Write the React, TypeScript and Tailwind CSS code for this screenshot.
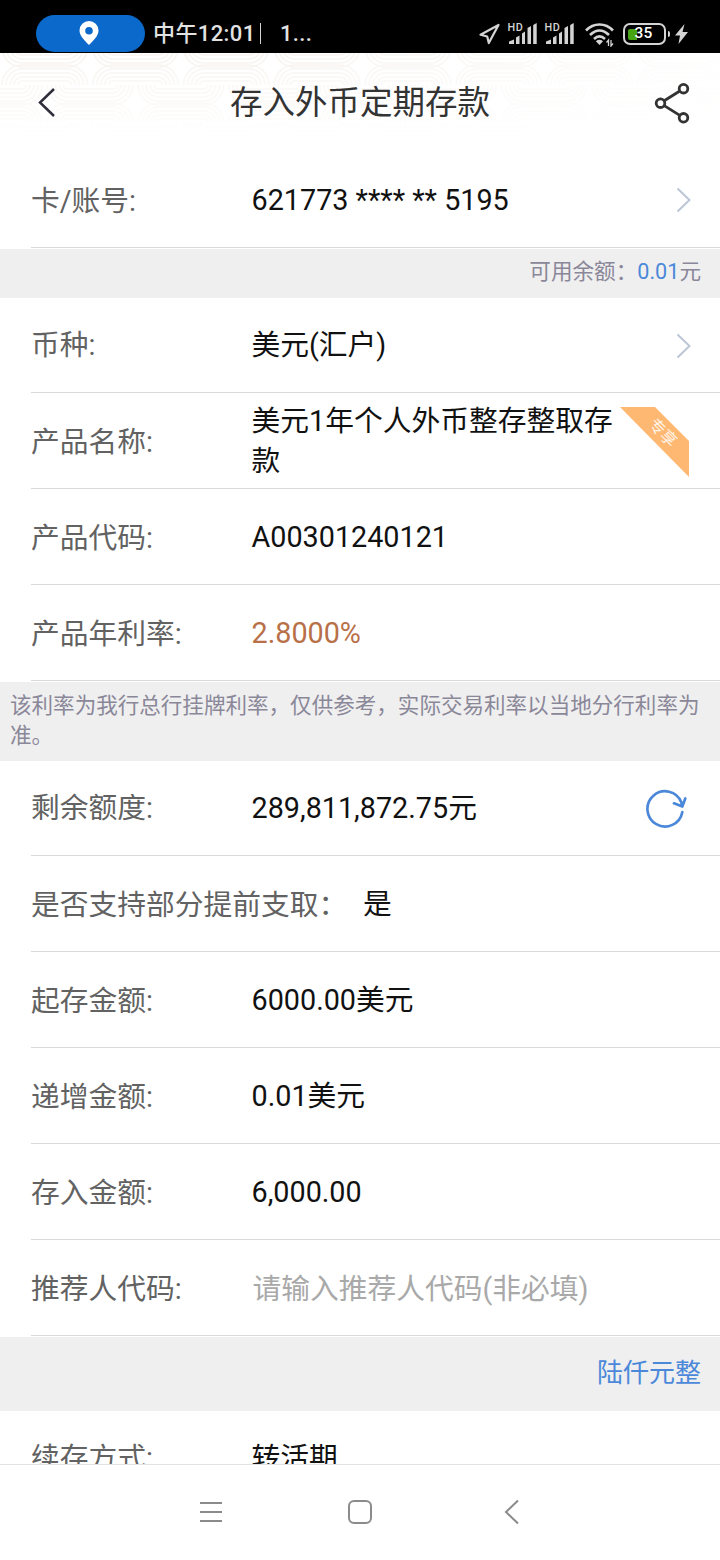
import React from "react";

const RINGS = [4, 8, 12, 16, 20];

const upper = (x: number, y: number, r: number) =>
  `M${x - r} ${y}A${r} ${r} 0 0 1 ${x} ${y - r}H${x + 45.4}A${r} ${r} 0 0 1 ${x + 45.4 + r} ${y}`;

const lower = (x: number, y: number, r: number) =>
  `M${x - r} ${y}A${r} ${r} 0 0 0 ${x} ${y + r}H${x + 45.4}A${r} ${r} 0 0 0 ${x + 45.4 + r} ${y}`;

function HeaderPattern() {
  return (
    <svg className="absolute inset-0 h-full w-full" viewBox="0 0 720 99" fill="none" aria-hidden="true">
      <defs>
        <pattern id="clouds" width="90.8" height="76" patternUnits="userSpaceOnUse" x="0" y="-44">
          <g stroke="#f7f3ef" strokeWidth="1.6">
            {RINGS.map((r) => (
              <path
                key={r}
                d={[
                  lower(22, 38, r),
                  upper(22, 76, r),
                  lower(-23.4, 0, r),
                  lower(67.4, 0, r),
                  upper(-23.4, 38, r),
                  upper(67.4, 38, r),
                ].join("")}
              />
            ))}
          </g>
        </pattern>
        <linearGradient id="fade" x1="0" y1="0" x2="0" y2="1">
          <stop offset="0" stopColor="#fff" stopOpacity="0" />
          <stop offset="0.85" stopColor="#fff" />
        </linearGradient>
        <linearGradient id="fadeRight" x1="0" y1="0" x2="1" y2="0">
          <stop offset="0.4" stopColor="#fff" stopOpacity="0" />
          <stop offset="1" stopColor="#fff" stopOpacity="0.9" />
        </linearGradient>
      </defs>
      <rect width="720" height="99" fill="url(#clouds)" />
      <rect width="720" height="99" fill="url(#fade)" />
      <rect width="720" height="99" fill="url(#fadeRight)" />
    </svg>
  );
}

function Signal() {
  return (
    <svg className="h-[24px] w-[29px] overflow-visible" viewBox="0 0 29 24" fill="#d4d4d4">
      <text x="-0.5" y="8.8" fontSize="10.8" fontWeight="500" letterSpacing="0.5" fontFamily="Roboto, sans-serif">HD</text>
      <path d="M1 22V19.5L6 17.5V22ZM8 22V15.5L11.5 13.5V22ZM14 22V11.5L17 9.5V22ZM19.5 22V6L23 4V22ZM25.2 22V3L28.7 1V22Z" />
    </svg>
  );
}

function StatusBar() {
  return (
    <div className="relative flex h-[53px] bg-black font-medium text-[#e2e2e2]">
      <div className="ml-[36px] mt-[15px] flex h-[37px] w-[109px] items-center justify-center rounded-full bg-[#0b69cb] pr-[3px]">
        <svg className="mb-px h-[24px] w-[20px]" viewBox="0 0 20 24">
          <path fill="#fff" fillRule="evenodd" d="M10 0A9.5 9.5 0 0 0 .5 9.5C.5 15 6 20 10 24C14 20 19.5 15 19.5 9.5A9.5 9.5 0 0 0 10 0ZM10 6A3.8 3.8 0 1 1 10 13.6A3.8 3.8 0 1 1 10 6Z" />
        </svg>
      </div>
      <span className="ml-[8px] mt-[17px] w-[102px] whitespace-nowrap text-[22px] leading-[34px] tracking-[0.4px]">中午12:01</span>
      <span className="ml-[5px] mt-[23px] h-[21px] w-px bg-[#d4d4d4]" />
      <span className="ml-[19px] mt-[17px] text-[22px] leading-[34px] tracking-[0.3px]">1...</span>
      <div className="absolute right-[32px] top-[22px] flex items-start">
        <svg className="mr-[8px] h-[24px] w-[21px]" viewBox="0 0 21 24" fill="none" stroke="#d4d4d4" strokeWidth="2.2" strokeLinejoin="round">
          <path d="M19.5 3L9.8 21L8.2 14.5L1.5 12.8Z" />
        </svg>
        <Signal />
        <span className="w-[8px]" />
        <Signal />
        <svg className="ml-[11px] h-[25px] w-[29px]" viewBox="0 0 29 25" fill="none" stroke="#d4d4d4" strokeWidth="2.6">
          <path d="M1 8.5C8.5 .5 20.5 .5 28 8.5M5 13C11 7 18 7 24 13M9 17C12.6 13.6 16.4 13.6 20 17" />
          <path fill="#d4d4d4" stroke="none" d="M10.8 19.2Q14.5 16.5 18 19.2L14.5 23Z" />
          <path strokeWidth="1.3" d="M23.5 24V18L21.5 20.5M26 18V24L28 21.5" />
        </svg>
        <div className="ml-[9px] mt-[1px] flex h-[22px] w-[43px] items-center rounded-[7px] border-[2.5px] border-[#d4d4d4] pl-[3px]">
          <span className="h-[11px] w-[9px] shrink-0 rounded-l-[2px] bg-[#47a514]" />
          <span className="-ml-[2px] text-[15.5px] leading-none tracking-[0.2px] text-white">35</span>
        </div>
        <span className="ml-[2px] mt-[9px] h-[6px] w-[2.5px] rounded-r bg-[#d4d4d4]" />
        <svg className="ml-[5px] mt-[2px] h-[20px] w-[13px]" viewBox="0 0 13 20" fill="#d4d4d4">
          <path d="M9.5 0L0 11.5H5L3.5 20L13 8H7.5Z" />
        </svg>
      </div>
    </div>
  );
}

function Header() {
  return (
    <header className="relative h-[99px] bg-white">
      <HeaderPattern />
      <div className="relative flex h-[99px] items-center pl-[36px] pr-[30px]">
        <svg className="h-[30px] w-[36px]" viewBox="0 0 36 30" fill="none" stroke="#302e3b" strokeWidth="2.5">
          <path d="M18 1L4 14.5L18 28" />
        </svg>
        <h1 className="flex-1 pr-[6px] text-center text-[32.5px] font-normal leading-[48px] text-[#333]">存入外币定期存款</h1>
        <svg className="h-[42px] w-[36px]" viewBox="0 0 36 42" fill="none" stroke="#333" strokeWidth="2.8">
          <circle cx="6.5" cy="21.2" r="4.3" />
          <circle cx="29.5" cy="6.7" r="4.3" />
          <circle cx="29.5" cy="35.8" r="4.3" />
          <path d="M10.2 18.8L25.8 9M10.2 23.6L25.8 33.4" />
        </svg>
      </div>
    </header>
  );
}

function Arrow() {
  return (
    <svg className="absolute right-[28px] top-[35px] h-[26px] w-[16px]" viewBox="0 0 16 26" fill="none" stroke="#bcc6d6" strokeWidth="2">
      <path d="M1.5 1.5L13.5 13L1.5 24.5" />
    </svg>
  );
}

function Ribbon() {
  return (
    <svg className="absolute right-[31px] top-[14px] h-[70px] w-[69px]" viewBox="0 0 69 70">
      <path d="M0 0H35L69 34V70Z" fill="#ffb871" />
      <text transform="translate(42.5 26) rotate(45)" textAnchor="middle" y="5" fontSize="16" fill="#fff" opacity="0.85">专享</text>
    </svg>
  );
}

type RowProps = {
  label: string;
  first?: boolean;
  children?: React.ReactNode;
  extra?: React.ReactNode;
  tone?: string;
  labelWidth?: string;
};

function Row({ label, first, children, extra, tone = "text-[#111]", labelWidth = "w-[220.5px]" }: RowProps) {
  return (
    <div className={`relative ml-[31px] flex items-center border-b border-[#d9d9d9] text-[28.75px] leading-[40px] ${first ? "h-[95px]" : "h-[96px]"}`}>
      <span className={`shrink-0 whitespace-nowrap text-[#626262] ${first ? "" : "pt-[2px]"} ${labelWidth}`}>{label}</span>
      <span className={`w-[368px] ${tone}`}>{children}</span>
      {extra}
    </div>
  );
}

function NavBar() {
  return (
    <nav className="h-[96px] border-t border-[#e2e2e2] bg-white">
      <svg className="h-[95px] w-full" viewBox="0 0 720 95" fill="none" stroke="#8b8b8b" strokeWidth="2">
        <path d="M200 38H222M200 47H222M200 56H222" />
        <rect x="349" y="36" width="22" height="22" rx="5" />
        <path d="M518 35.5L506 47L518 58.5" />
      </svg>
    </nav>
  );
}

export default function App() {
  return (
    <main className="flex h-[1560px] w-[720px] flex-col overflow-hidden bg-white font-[Roboto,'Noto_Sans_CJK_SC',sans-serif]">
      <StatusBar />
      <Header />
      <div className="min-h-0 flex-1 overflow-hidden">
        <Row label="卡/账号:" extra={<Arrow />}>621773 **** ** 5195</Row>
        <div className="mt-px h-[49px] bg-[#efefef] pr-[19px] text-right text-[21.6px] leading-[45px] text-[#8a8799]">
          可用余额：<span className="text-[#4b88da]">0.01</span>元
        </div>
        <Row first label="币种:" extra={<Arrow />}>美元(汇户)</Row>
        <Row label="产品名称:" tone="pt-px text-[#111]" extra={<Ribbon />}>美元1年个人外币整存整取存款</Row>
        <Row label="产品代码:">A00301240121</Row>
        <Row label="产品年利率:" tone="text-[#b87048]">2.8000%</Row>
        <div className="mt-px h-[79px] bg-[#efefef] pl-[10px] pt-[9px] text-[21.55px] leading-[30px] text-[#8a8799]">
          该利率为我行总行挂牌利率，仅供参考，实际交易利率以当地分行利率为准。
        </div>
        <Row
          first
          label="剩余额度:"
          extra={
            <svg className="absolute right-[32px] top-[27px] h-[42px] w-[42px]" viewBox="0 0 42 42" fill="none" stroke="#4b88da" strokeWidth="2.7" strokeLinecap="round" strokeLinejoin="round">
              <path d="M36.3 24.2A17.6 17.6 0 1 1 35.3 14.2L36.3 18.5M28 15.3L36.3 18.5L39.3 10.5" />
            </svg>
          }
        >
          289,811,872.75元
        </Row>
        <Row label="是否支持部分提前支取：" labelWidth="w-[332px]" tone="pt-px text-[#111]">是</Row>
        <Row label="起存金额:">6000.00美元</Row>
        <Row label="递增金额:">0.01美元</Row>
        <Row label="存入金额:">6,000.00</Row>
        <Row label="推荐人代码:" tone="pl-px pt-[2px] text-[#a9a9a9]">请输入推荐人代码(非必填)</Row>
        <div className="mt-px h-[74px] bg-[#efefef] pr-[19px] text-right text-[26px] leading-[73px] text-[#4b88da]">陆仟元整</div>
        <Row first label="续存方式:">转活期</Row>
      </div>
      <NavBar />
    </main>
  );
}
